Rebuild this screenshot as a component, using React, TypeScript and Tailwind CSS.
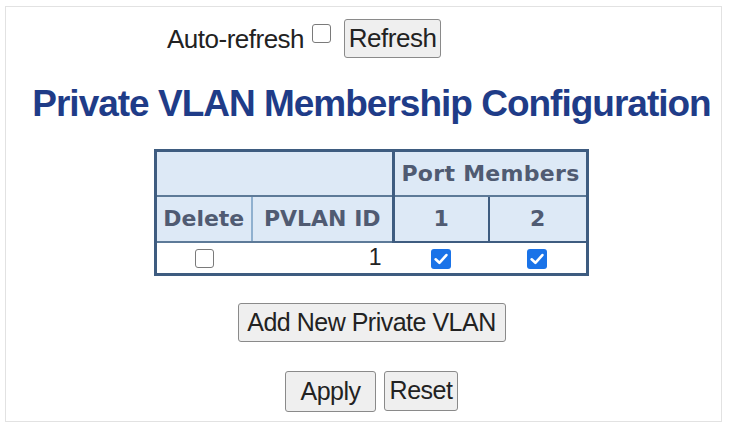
import React from "react";

const Check = ({ checked }: { checked?: boolean }) =>
  checked ? (
    <span className="inline-flex h-[20px] w-[20px] items-center justify-center rounded-[3px] bg-[#1a73e8]">
      <svg width="14" height="12" viewBox="0 0 13 11" fill="none">
        <path d="M1.5 5.8 L5 9 L11.5 1.8" stroke="white" strokeWidth="2.4" strokeLinecap="round" strokeLinejoin="round" />
      </svg>
    </span>
  ) : (
    <span className="inline-block h-[19px] w-[19px] rounded-[3px] border-[1.5px] border-[#7a7a7a] bg-white" />
  );

const Btn = ({ children, cls }: { children: React.ReactNode; cls: string }) => (
  <button
    className={
      "flex items-center justify-center rounded-[3px] border border-[#8a8a8a] bg-[#efefef] text-[#222] " +
      cls
    }
  >
    {children}
  </button>
);

export default function App() {
  const sans = { fontFamily: '"Liberation Sans", Arial, sans-serif' };
  const dv = { fontFamily: '"DejaVu Sans", Verdana, sans-serif' };
  return (
    <div className="h-[423px] w-[731px] bg-white" style={sans}>
      <div className="ml-[5px] mt-[6px] h-[416px] w-[717px] border border-[#e2e2e2] pt-[12px]">
        <div className="flex items-center pl-[161px] text-[#222]">
          <span className="text-[26px] leading-none tracking-[-0.5px]">Auto-refresh</span>
          <span className="ml-[8px] mt-[-4px]">
            <Check />
          </span>
          <Btn cls="ml-[13px] h-[39px] w-[97px] text-[26px] tracking-[-0.5px]">Refresh</Btn>
        </div>
        <div className="flex flex-col items-center pl-[16px]">
          <h1 className="mt-[25px] text-[37px] font-bold leading-[42px] tracking-[-1px] text-[#1f3c88]">
            Private VLAN Membership Configuration
          </h1>
          <table className="mt-[24px] border-collapse border-[3px] border-[#3e5c80]">
            <tbody>
              <tr className="h-[45px] bg-[#dde9f6]" style={dv}>
                <td colSpan={2} className="border-b-2 border-[#5d7a98]" />
                <td
                  colSpan={2}
                  className="border-b-2 border-l-[3px] border-[#5d7a98] border-l-[#3e5c80] text-center text-[22px] font-bold tracking-[0.3px] text-[#505b72]"
                >
                  Port Members
                </td>
              </tr>
              <tr className="h-[46px] bg-[#dde9f6] text-[22px] font-bold text-[#505b72]" style={dv}>
                <td className="w-[96px] border-b-2 border-r-2 border-[#5d7a98] border-r-[#8fb0cf] text-center">Delete</td>
                <td className="w-[142px] border-b-2 border-[#5d7a98] text-center">PVLAN ID</td>
                <td className="w-[95px] border-b-2 border-l-[3px] border-r-2 border-[#3e5c80] text-center">1</td>
                <td className="w-[99px] border-b-2 border-[#3e5c80] text-center">2</td>
              </tr>
              <tr className="h-[33px] bg-white">
                <td className="text-center">
                  <span className="inline-flex align-middle">
                    <Check />
                  </span>
                </td>
                <td className="pr-[12px] text-right text-[23px] leading-none text-[#222]">1</td>
                <td className="text-center">
                  <span className="inline-flex align-middle">
                    <Check checked />
                  </span>
                </td>
                <td className="text-center">
                  <span className="inline-flex align-middle">
                    <Check checked />
                  </span>
                </td>
              </tr>
            </tbody>
          </table>
          <Btn cls="mt-[27px] h-[39px] w-[268px] text-[25px] tracking-[-0.5px]">Add New Private VLAN</Btn>
          <div className="mt-[29px] flex gap-[8px]">
            <Btn cls="h-[41px] w-[91px] text-[25px] tracking-[-0.5px]">Apply</Btn>
            <Btn cls="h-[40px] w-[74px] text-[25px] tracking-[-0.5px]">Reset</Btn>
          </div>
        </div>
      </div>
    </div>
  );
}
